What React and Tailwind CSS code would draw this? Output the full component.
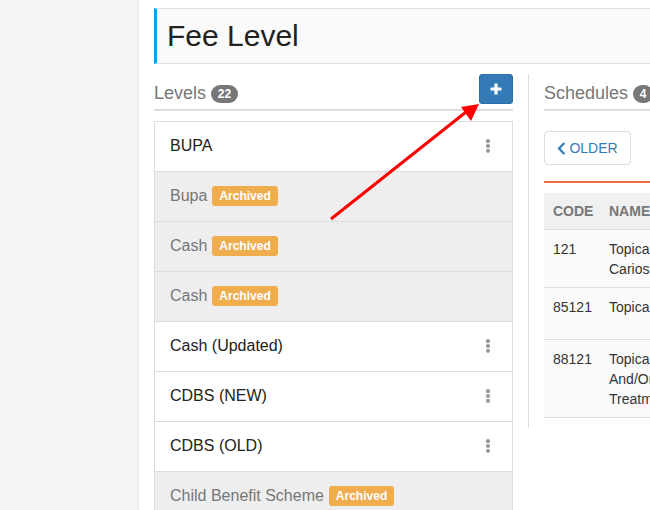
import React from "react";

const levels = [
  { name: "BUPA" },
  { name: "Bupa", archived: true },
  { name: "Cash", archived: true },
  { name: "Cash", archived: true },
  { name: "Cash (Updated)" },
  { name: "CDBS (NEW)" },
  { name: "CDBS (OLD)" },
  { name: "Child Benefit Scheme", archived: true },
];

const rows = [
  { code: "121", lines: ["Topical Fluoride", "Cariostatic Agent"], h: "h-[58px]" },
  { code: "85121", lines: ["Topical Fluoride"], h: "h-[52px]" },
  { code: "88121", lines: ["Topical Fluoride", "And/Or Other", "Treatment"], h: "h-[78px]" },
];

function Dots() {
  return (
    <svg width="6" height="14" viewBox="0 0 6 14" className="ml-auto mr-[21px] shrink-0 fill-[#999999]">
      <circle cx="3" cy="2.2" r="2.1" />
      <circle cx="3" cy="7" r="2.1" />
      <circle cx="3" cy="11.8" r="2.1" />
    </svg>
  );
}

function Row({ name, archived }) {
  return (
    <div
      className={`flex h-[50px] shrink-0 items-center border-b border-[#dddddd] pb-[2px] pl-[15px] text-[16px] ${
        archived ? "bg-[#eeeeee] text-[#777777]" : "bg-white text-[#222222]"
      }`}
    >
      <span>{name}</span>
      {archived ? (
        <span className="ml-[5px] flex h-5 items-center rounded-[3px] bg-[#f0ad4e] px-[7px] text-[12px] font-bold text-white">
          Archived
        </span>
      ) : (
        <Dots />
      )}
    </div>
  );
}

export default function App() {
  return (
    <div className="relative flex h-[510px] w-[650px] overflow-hidden bg-white font-['Liberation_Sans',Arial,sans-serif]">
      <aside className="w-[139px] shrink-0 border-r border-[#e7e7e7] bg-[#f4f4f4]" />
      <main className="flex min-w-0 flex-1 flex-col pl-[15px] pt-2">
        <div className="flex h-14 w-[520px] shrink-0 items-center border-y border-[#e0e0e0] border-l-[3px] border-l-[#0ea5dc] bg-[#fafafa] pb-[2px] pl-[10px] text-[30px] text-[#222222]">
          Fee Level
        </div>
        <div className="mt-[10px] flex min-h-0 flex-1 items-start">
          <section className="w-[359px] shrink-0">
            <div className="flex h-[37px] items-start border-b-2 border-[#dddddd]">
              <div className="mt-[6px] flex items-center text-[18px] text-[#777777]">
                Levels
                <span className="ml-[5px] flex h-[18px] w-[27px] items-center justify-center rounded-[9px] bg-[#777777] text-[12px] font-bold text-white">
                  22
                </span>
              </div>
              <button className="ml-auto flex h-[30px] w-[34px] items-center justify-center rounded-[3px] border border-[#2e6da4] bg-[#337ab7]">
                <svg width="12" height="12" viewBox="0 0 12 12" className="fill-white">
                  <rect x="0.5" y="4.4" width="11" height="3.2" rx="0.6" />
                  <rect x="4.4" y="0.5" width="3.2" height="11" rx="0.6" />
                </svg>
              </button>
            </div>
            <div className="mt-[10px] flex flex-col border-x border-t border-[#dddddd]">
              {levels.map((l, i) => (
                <Row key={i} {...l} />
              ))}
            </div>
          </section>
          <div className="ml-[15px] h-[354px] w-px shrink-0 bg-[#dddddd]" />
          <section className="ml-[15px] w-[300px] shrink-0">
            <div className="flex h-[37px] items-start border-b-2 border-[#dddddd]">
              <div className="mt-[6px] flex items-center text-[18px] text-[#777777]">
                Schedules
                <span className="ml-[5px] flex h-[18px] w-[20px] items-center justify-center rounded-[9px] bg-[#777777] text-[12px] font-bold text-white">
                  4
                </span>
              </div>
            </div>
            <button className="mt-5 flex h-[34px] w-[87px] items-center justify-center gap-[3px] rounded-[4px] border border-[#dddddd] bg-white text-[14px] text-[#337ab7]">
              <svg width="9" height="13" viewBox="0 0 9 13" fill="none" className="stroke-[#337ab7]" strokeWidth="2.2">
                <path d="M7.4 1 2 6.5l5.4 5.5" />
              </svg>
              OLDER
            </button>
            <div className="mt-4 h-[2px] bg-[#f26b43]" />
            <div className="mt-[10px] text-[14px]">
              <div className="flex h-[37px] items-center border-b border-[#dddddd] bg-[#eff1f1] pl-[9px] font-bold text-[#777777]">
                <span className="w-[56px]">CODE</span>
                <span>NAME</span>
              </div>
              {rows.map((r) => (
                <div key={r.code} className={`flex border-b border-[#dddddd] bg-[#fafafa] pl-[9px] pt-[9px] text-[#333333] ${r.h}`}>
                  <span className="w-[56px] shrink-0 leading-5">{r.code}</span>
                  <div className="whitespace-nowrap leading-5">
                    {r.lines.map((t) => (
                      <div key={t}>{t}</div>
                    ))}
                  </div>
                </div>
              ))}
            </div>
          </section>
        </div>
      </main>
      <svg className="pointer-events-none absolute left-0 top-0" width="650" height="510" viewBox="0 0 650 510">
        <line x1="331" y1="219" x2="466" y2="112" stroke="#ff0000" strokeWidth="3" />
        <polygon points="479,104 461,107 471,121" fill="#ff0000" />
      </svg>
    </div>
  );
}
